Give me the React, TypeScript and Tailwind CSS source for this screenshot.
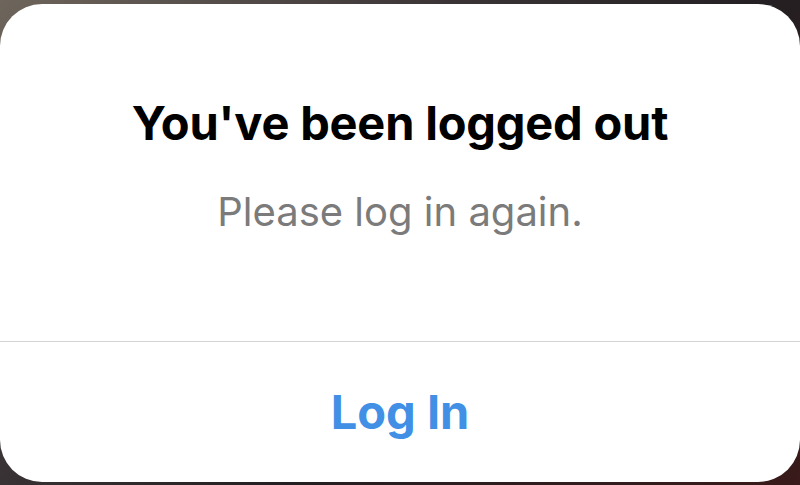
export default function App() {
  return (
    <div
      className="w-[800px] h-[485px] overflow-hidden bg-[linear-gradient(135deg,#6e655c_0%,#3a3436_35%,#241f22_60%,#3a1a1a_100%)] pt-[4px]"
      style={{ fontFamily: 'Inter, "Noto Sans", sans-serif' }}
    >
      <div className="w-[800px] h-[478px] bg-white rounded-[42px] flex flex-col">
        <div className="h-[337px] flex flex-col items-center pt-[91px]">
          <h1 className="text-[47px] leading-[56px] font-bold text-black tracking-[-0.2px]">
            You've been logged out
          </h1>
          <p className="mt-[36px] text-[40px] leading-[50px] text-[#7b7b7b]">
            Please log in again.
          </p>
        </div>
        <div className="h-px bg-[#d4d4d6]" />
        <button className="flex-1 flex items-center justify-center text-[47px] font-bold text-[#4190e6]">
          Log In
        </button>
      </div>
    </div>
  );
}
